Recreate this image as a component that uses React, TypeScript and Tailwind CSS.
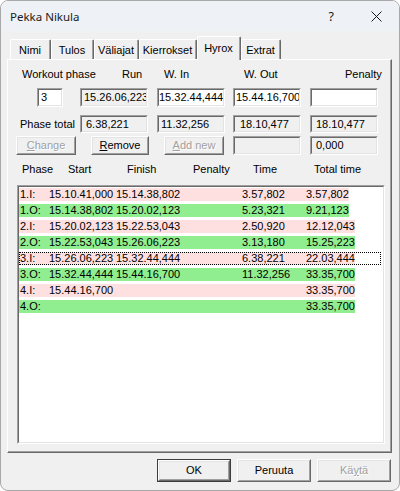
import React from "react";

type BoxProps = { className?: string; inner?: string; children?: React.ReactNode };

const Sunken = ({ className = "", inner = "", children }: BoxProps) => (
  <div
    className={`shrink-0 border border-t-[#a0a0a0] border-l-[#a0a0a0] border-b-white border-r-white ${className}`}
  >
    <div
      className={`h-full border border-t-[#696969] border-l-[#696969] border-b-[#e3e3e3] border-r-[#e3e3e3] flex items-center overflow-hidden whitespace-nowrap ${inner}`}
    >
      {children}
    </div>
  </div>
);

type BtnProps = { className?: string; children?: React.ReactNode; def?: boolean; disabled?: boolean };

const Btn = ({ className = "", children, def, disabled }: BtnProps) => (
  <div className={`shrink-0 ${def ? "border border-[#3c3c3c]" : ""} ${className}`}>
    <div className="h-full border border-t-white border-l-white border-b-[#696969] border-r-[#696969]">
      <div
        className={`h-full border border-t-[#e3e3e3] border-l-[#e3e3e3] border-b-[#a0a0a0] border-r-[#a0a0a0] bg-[#f0f0f0] flex items-center justify-center whitespace-nowrap ${
          disabled ? "text-[#a0a0a0] [text-shadow:1px_1px_0_#ffffff]" : "text-black"
        }`}
      >
        {children}
      </div>
    </div>
  </div>
);

type TabProps = { className?: string; label: string; selected?: boolean };

const Tab = ({ className = "", label, selected }: TabProps) =>
  selected ? (
    <div
      className={`shrink-0 h-[24px] mb-[-1px] bg-[#f0f0f0] border-l border-t border-l-white border-t-white border-r border-r-[#696969] rounded-tl-[2px] rounded-tr-[2px] relative z-10 ${className}`}
    >
      <div className="h-full border-r border-r-[#a0a0a0] flex items-center justify-center pb-[1px]">{label}</div>
    </div>
  ) : (
    <div
      className={`shrink-0 h-[20px] bg-[#f0f0f0] border-l border-t border-l-white border-t-white border-r border-r-[#696969] rounded-tl-[2px] rounded-tr-[2px] ${className}`}
    >
      <div className="h-full border-r border-r-[#a0a0a0] flex items-center justify-center pt-[2px]">{label}</div>
    </div>
  );

type Row = { l: string; s: string; f: string; t: string; tt: string; focus?: boolean };

const rows: Row[] = [
  { l: "1.I:", s: "15.10.41,000", f: "15.14.38,802", t: "3.57,802", tt: "3.57,802" },
  { l: "1.O:", s: "15.14.38,802", f: "15.20.02,123", t: "5.23,321", tt: "9.21,123" },
  { l: "2.I:", s: "15.20.02,123", f: "15.22.53,043", t: "2.50,920", tt: "12.12,043" },
  { l: "2.O:", s: "15.22.53,043", f: "15.26.06,223", t: "3.13,180", tt: "15.25,223" },
  { l: "3.I:", s: "15.26.06,223", f: "15.32.44,444", t: "6.38,221", tt: "22.03,444", focus: true },
  { l: "3.O:", s: "15.32.44,444", f: "15.44.16,700", t: "11.32,256", tt: "33.35,700" },
  { l: "4.I:", s: "15.44.16,700", f: "", t: "", tt: "33.35,700" },
  { l: "4.O:", s: "", f: "", t: "", tt: "33.35,700" },
];

export default function App() {
  return (
    <div className="w-[400px] h-[491px] rounded-[8px] border border-[#a8a8a8] bg-[#f0f0f0] overflow-hidden flex flex-col font-['Liberation_Sans',Arial,sans-serif] text-[11px] leading-[13px] text-black">
      {/* Title bar */}
      <div className="h-[30px] shrink-0 bg-[#eef2f7] flex items-center pl-[9px] font-['Noto_Sans',sans-serif] text-[11.5px] text-[#1a1a1a]">
        <span>Pekka Nikula</span>
        <span className="ml-auto text-[12.5px]">?</span>
        <span className="ml-[37px] mr-[17px] flex items-center">
          <svg width="11" height="11" viewBox="0 0 11 11">
            <path d="M0.5 0.5 L10.5 10.5 M10.5 0.5 L0.5 10.5" stroke="#1a1a1a" strokeWidth="1" fill="none" />
          </svg>
        </span>
      </div>

      {/* Body */}
      <div className="flex-1 flex flex-col pl-[6px] pr-[7px]">
        {/* Tabs */}
        <div className="h-[28px] shrink-0 flex items-end pl-[3px] relative z-10">
          <Tab className="w-[41px]" label="Nimi" />
          <Tab className="w-[43px]" label="Tulos" />
          <Tab className="w-[45px]" label="Väliajat" />
          <Tab className="w-[58px]" label="Kierrokset" />
          <Tab className="w-[44px]" label="Hyrox" selected />
          <Tab className="w-[40px]" label="Extrat" />
        </div>

        {/* Panel */}
        <div className="h-[394px] shrink-0 border border-t-white border-l-white border-b-[#696969] border-r-[#696969]">
          <div className="h-full border-r border-b border-r-[#a0a0a0] border-b-[#a0a0a0] flex flex-col">
            {/* Row 1 labels */}
            <div className="mt-[8px] h-[13px] flex whitespace-nowrap">
              <div className="ml-[14px] w-[100px] shrink-0">Workout phase</div>
              <div className="w-[42px] shrink-0">Run</div>
              <div className="w-[80px] shrink-0">W. In</div>
              <div className="w-[101px] shrink-0">W. Out</div>
              <div className="shrink-0">Penalty</div>
            </div>

            {/* Row 2 inputs */}
            <div className="mt-[7px] h-[19px] flex">
              <Sunken className="ml-[29px] w-[26px] h-[19px]" inner="bg-white pl-[2px]">3</Sunken>
              <Sunken className="ml-[17px] w-[68px] h-[19px]" inner="bg-[#f0f0f0] pl-[2px]">15.26.06,223</Sunken>
              <Sunken className="ml-[9px] w-[68px] h-[19px]" inner="bg-white pl-[0px]">15.32.44,444</Sunken>
              <Sunken className="ml-[8px] w-[68px] h-[19px]" inner="bg-white pl-[1px]">15.44.16,700</Sunken>
              <Sunken className="ml-[9px] w-[68px] h-[19px]" inner="bg-white" />
            </div>

            {/* Row 3 phase total */}
            <div className="mt-[8px] h-[18px] flex items-center">
              <div className="ml-[12px] w-[60px] shrink-0 whitespace-nowrap">Phase total</div>
              <Sunken className="w-[68px] h-[18px]" inner="bg-[#f0f0f0] pl-[4px]">6.38,221</Sunken>
              <Sunken className="ml-[9px] w-[68px] h-[18px]" inner="bg-[#f0f0f0] pl-[2px]">11.32,256</Sunken>
              <Sunken className="ml-[8px] w-[68px] h-[18px]" inner="bg-[#f0f0f0] pl-[5px]">18.10,477</Sunken>
              <Sunken className="ml-[9px] w-[68px] h-[18px]" inner="bg-[#f0f0f0] pl-[4px]">18.10,477</Sunken>
            </div>

            {/* Row 4 buttons */}
            <div className="mt-[3px] h-[19px] flex">
              <Btn className="ml-[8px] w-[60px] h-[19px]" disabled>
                <span className="underline">C</span>hange
              </Btn>
              <Btn className="ml-[15px] w-[58px] h-[19px]">
                <span className="underline">R</span>emove
              </Btn>
              <Btn className="ml-[15px] w-[60px] h-[19px]" disabled>
                <span className="underline">A</span>dd new
              </Btn>
              <Sunken className="ml-[9px] w-[68px] h-[19px]" inner="bg-[#f0f0f0]" />
              <Sunken className="ml-[9px] w-[68px] h-[19px]" inner="bg-[#f0f0f0] pl-[4px]">0,000</Sunken>
            </div>

            {/* Row 5 headers */}
            <div className="mt-[8px] h-[13px] flex whitespace-nowrap">
              <div className="ml-[14px] w-[46px] shrink-0">Phase</div>
              <div className="w-[59px] shrink-0">Start</div>
              <div className="w-[66px] shrink-0">Finish</div>
              <div className="w-[60px] shrink-0">Penalty</div>
              <div className="w-[61px] shrink-0">Time</div>
              <div className="shrink-0">Total time</div>
            </div>

            {/* List box */}
            <div className="mt-[9px] ml-[9px] w-[368px] h-[259px] shrink-0 border border-t-[#a0a0a0] border-l-[#a0a0a0] border-b-white border-r-white">
              <div className="h-full border border-t-[#696969] border-l-[#696969] border-b-[#e3e3e3] border-r-[#e3e3e3] bg-white pt-[1px] pr-[2px] flex flex-col">
                {rows.map((r, i) => {
                  const bg = i % 2 === 0 ? "bg-[#ffe0e0]" : "bg-[#90ee90]";
                  return (
                    <div key={r.l} className="h-[16px] shrink-0">
                      <div className="relative h-[13px] w-full">
                        <div className={`inline-flex h-[13px] items-center whitespace-nowrap ${bg}`}>
                          <span className="w-[30px] pl-[1px] shrink-0">{r.l}</span>
                          <span className="w-[67px] shrink-0">{r.s}</span>
                          <span className="w-[126px] shrink-0">{r.f}</span>
                          <span className="w-[64px] shrink-0">{r.t}</span>
                          <span className="shrink-0">{r.tt}</span>
                        </div>
                        {r.focus && (
                          <div className="absolute inset-0 border border-dotted border-black pointer-events-none" />
                        )}
                      </div>
                    </div>
                  );
                })}
              </div>
            </div>
          </div>
        </div>

        {/* Bottom buttons */}
        <div className="mt-[6px] h-[23px] shrink-0 flex justify-end gap-[6px] pr-[1px]">
          <Btn className="w-[74px] h-[23px]" def>
            OK
          </Btn>
          <Btn className="w-[74px] h-[23px]">Peruuta</Btn>
          <Btn className="w-[74px] h-[23px]" disabled>
            Kä<span className="underline">y</span>tä
          </Btn>
        </div>
      </div>
    </div>
  );
}
